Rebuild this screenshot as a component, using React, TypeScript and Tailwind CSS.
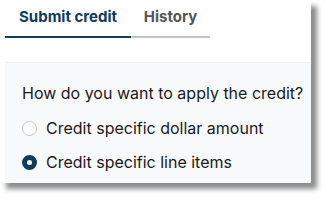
import { useState } from 'react';

export default function App() {
  const [tab, setTab] = useState<'submit' | 'history'>('submit');
  const [mode, setMode] = useState<'amount' | 'lines'>('lines');

  return (
    <div className="w-[326px] h-[200px] bg-white font-['Inter',sans-serif]">
      <div className="w-[311px] h-[183px] bg-white shadow-[6px_6px_5px_rgba(0,0,0,0.45)] flex flex-col">
        {/* Tabs */}
        <div className="flex pl-[5px] pt-[5px]">
          <button
            onClick={() => setTab('submit')}
            className={`w-[126px] h-[33px] pb-[7px] text-[15px] font-bold border-b-2 ${
              tab === 'submit' ? 'text-[#0f3b5f] border-[#143b58]' : 'text-[#555] border-[#c4c4c4]'
            }`}
          >
            Submit credit
          </button>
          <button
            onClick={() => setTab('history')}
            className={`w-[79px] h-[33px] pb-[7px] text-[15px] font-bold border-b-2 ${
              tab === 'history' ? 'text-[#0f3b5f] border-[#143b58]' : 'text-[#555] border-[#c4c4c4]'
            }`}
          >
            History
          </button>
        </div>

        {/* Panel */}
        <div className="ml-[5px] mt-[24px] flex-1 bg-[#f8f9fb] border-t border-[#eef0f2] pl-[17px] pt-[18px]">
          <p className="text-[16px] text-[#1a1a1a] leading-[24px]">How do you want to apply the credit?</p>
          <div className="mt-[11px] flex flex-col gap-[10px]">
            <label className="flex items-center gap-[9px] h-[24px] cursor-pointer" onClick={() => setMode('amount')}>
              <span
                className={`w-[15px] h-[15px] rounded-full bg-white ${
                  mode === 'amount' ? 'border-[5px] border-[#0f3b5f]' : 'border border-[#c8c8c8]'
                }`}
              />
              <span className="text-[16px] text-[#1a1a1a]">Credit specific dollar amount</span>
            </label>
            <label className="flex items-center gap-[9px] h-[24px] cursor-pointer" onClick={() => setMode('lines')}>
              <span
                className={`w-[15px] h-[15px] rounded-full bg-white ${
                  mode === 'lines' ? 'border-[5px] border-[#0f3b5f]' : 'border border-[#c8c8c8]'
                }`}
              />
              <span className="text-[16px] text-[#1a1a1a]">Credit specific line items</span>
            </label>
          </div>
        </div>
      </div>
    </div>
  );
}
